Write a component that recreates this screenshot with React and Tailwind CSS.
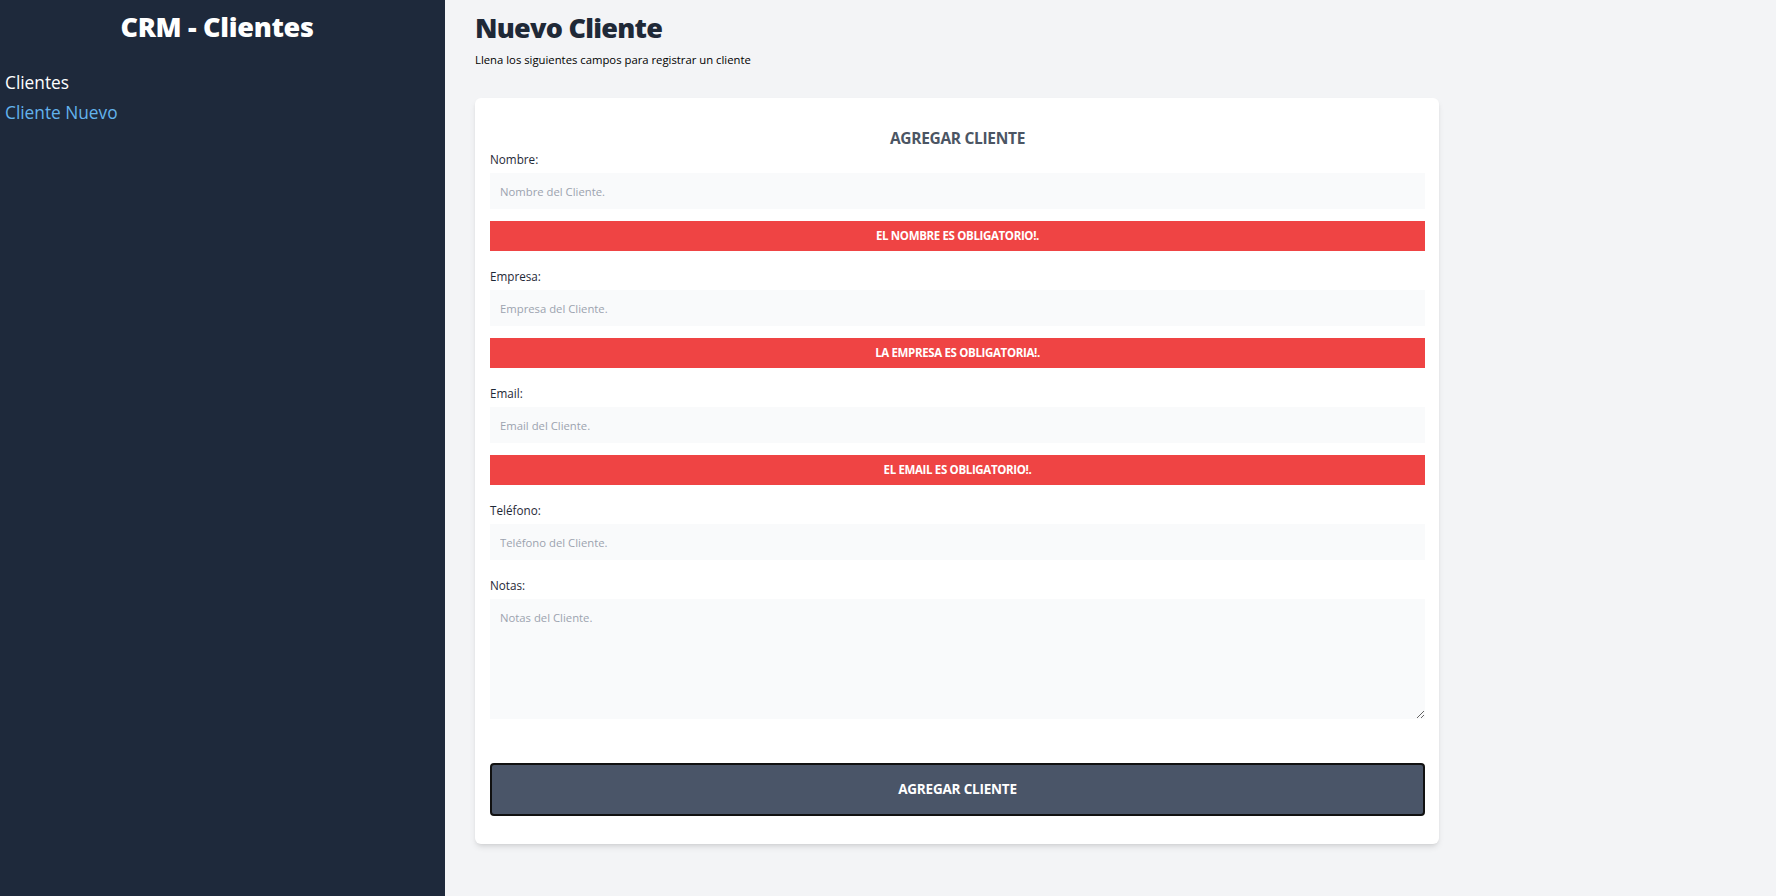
import { useState } from 'react';

const campos = [
  { id: 'nombre', label: 'Nombre:', placeholder: 'Nombre del Cliente.', error: 'El nombre es obligatorio!.' },
  { id: 'empresa', label: 'Empresa:', placeholder: 'Empresa del Cliente.', error: 'La empresa es obligatoria!.' },
  { id: 'email', label: 'Email:', placeholder: 'Email del Cliente.', error: 'El email es obligatorio!.' },
  { id: 'telefono', label: 'Teléfono:', placeholder: 'Teléfono del Cliente.' },
];

function Alerta({ children }) {
  return (
    <div className="mt-[12px] h-[30px] flex items-center justify-center bg-[#ef4444] text-white text-[11.5px] tracking-[-0.35px] font-bold uppercase">
      {children}
    </div>
  );
}

export default function App() {
  const [valores, setValores] = useState({});

  return (
    <div className="flex min-h-screen bg-[#f3f4f6] font-['Open_Sans',sans-serif]">
      {/* Sidebar */}
      <aside className="w-[445px] shrink-0 bg-[#1e293b] pt-[9px]">
        <h2 className="pr-[11px] text-center text-[27px] leading-[36px] tracking-[-0.3px] font-black text-white">CRM - Clientes</h2>
        <nav className="mt-[23px] px-[5px] text-[17.3px] leading-[30px]">
          <a href="#" className="block text-white">Clientes</a>
          <a href="#" className="block text-[#63b3ed]">Cliente Nuevo</a>
        </nav>
      </aside>

      {/* Contenido */}
      <main className="flex-1 px-[30px] pt-[10px]">
        <h1 className="text-[27px] leading-[36px] tracking-[-0.75px] font-black text-[#1f2937]">Nuevo Cliente</h1>
        <p className="mt-[5px] text-[11.3px] leading-[17px] text-black">Llena los siguientes campos para registrar un cliente</p>

        <form className="mt-[30px] w-[964px] bg-white rounded-md shadow-md pl-[15px] pr-[14px] pt-[28px] pb-[28px]">
          <h2 className="text-center text-[15.5px] leading-[24px] tracking-[-0.3px] font-bold uppercase text-[#4b5563]">Agregar Cliente</h2>

          {campos.map((c) => (
            <div key={c.id} className="mb-4">
              <label htmlFor={c.id} className="block mb-[5px] text-[11.7px] leading-[18px] text-[#1f2937]">{c.label}</label>
              <input
                id={c.id}
                type="text"
                placeholder={c.placeholder}
                value={valores[c.id] || ''}
                onChange={(e) => setValores({ ...valores, [c.id]: e.target.value })}
                className="block w-full h-[36px] px-[10px] bg-[#f9fafb] text-[11.3px] outline-none placeholder:text-[#9ca3af]"
              />
              {c.error && <Alerta>{c.error}</Alerta>}
            </div>
          ))}

          <div>
            <label htmlFor="notas" className="block mb-[5px] text-[11.7px] leading-[18px] text-[#1f2937]">Notas:</label>
            <textarea
              id="notas"
              placeholder="Notas del Cliente."
              className="block w-full h-[120px] px-[10px] py-[9px] bg-[#f9fafb] text-[11.3px] leading-[20px] outline-none placeholder:text-[#9ca3af]"
            />
          </div>

          <button
            type="button"
            className="mt-[44px] w-full h-[53px] bg-[#4a5568] border-2 border-[#111111] rounded-[4px] text-white text-[13.5px] tracking-[-0.2px] font-bold uppercase"
          >
            Agregar Cliente
          </button>
        </form>
      </main>
    </div>
  );
}
